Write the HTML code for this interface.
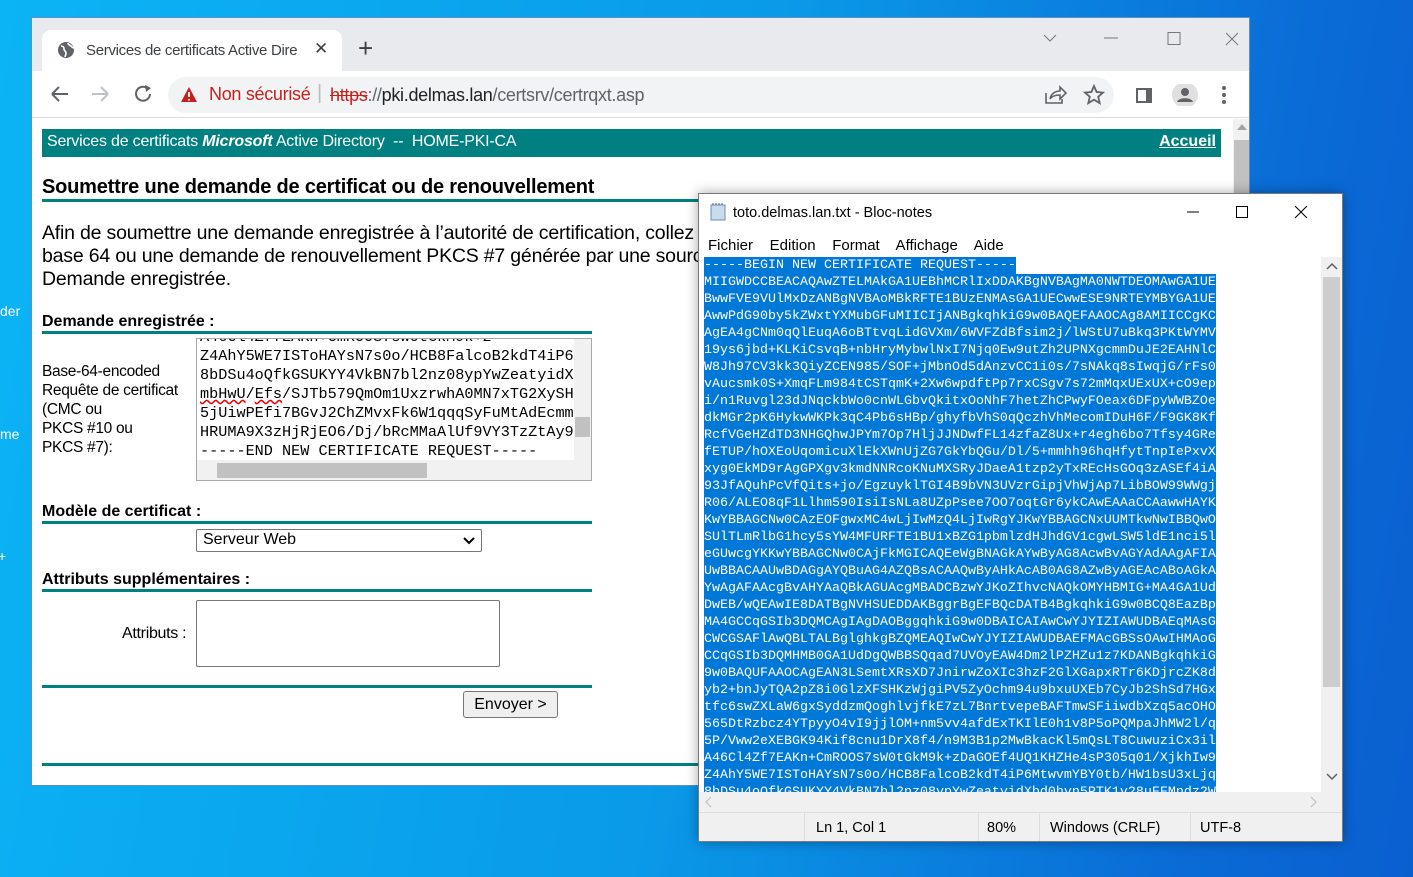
<!DOCTYPE html>
<html><head><meta charset="utf-8"><style>
*{margin:0;padding:0;box-sizing:border-box}
body{width:1413px;height:877px;overflow:hidden;position:relative;background:linear-gradient(100deg,#0bb4f5 0%,#0a9ae8 50%,#0a6bd6 85%,#0a5fcf 100%);font-family:"Liberation Sans",Arial,sans-serif}
.a{position:absolute;white-space:nowrap}
.br{position:absolute;left:31px;top:17px;width:1219px;height:769px;background:#fff;border:1px solid #5a8fc8;overflow:hidden}
.tabbar{position:absolute;left:0;top:0;width:100%;height:53px;background:#e8eaed}
.tab{position:absolute;left:10px;top:12px;width:300px;height:42px;background:#fff;border-radius:9px 9px 0 0}
.omni{position:absolute;left:136px;top:59px;width:946px;height:36px;background:#f1f3f4;border-radius:18px}
.bar{position:absolute;left:10px;top:111px;width:1179px;height:28px;background:#008080;color:#fff;font-size:16px}
.h{font-weight:bold;font-size:16px;color:#000}
.tl{position:absolute;background:#008080;height:3px}
.ta{position:absolute;border:1px solid #a9a9a9;background:#fff;overflow:hidden}
.np{position:absolute;left:698px;top:193px;width:645px;height:649px;background:#fff;border:1px solid #7a7a7a;box-shadow:0 0 12px rgba(0,0,0,.35);overflow:hidden}
.code{position:absolute;left:5px;top:63px;font-family:"Liberation Mono",monospace;font-size:13.33px;line-height:17px;color:#fff}
.code div{background:#0078d7;display:inline-block;white-space:pre}
.m{font-size:14.5px;color:#000}
</style></head><body>
<div class="a" style="left:0;top:303px;color:#fff;font-size:14px">der</div>
<div class="a" style="left:0;top:426px;color:#fff;font-size:14px">me</div>
<div class="a" style="left:-2px;top:548px;color:#fff;font-size:14px">+</div>

<div class="br">
 <div class="tabbar"></div>
 <div class="tab"></div>
 <svg class="a" style="left:25px;top:23px" width="18" height="18" viewBox="0 0 18 18"><circle cx="9" cy="9" r="8" fill="#5f6368"/><path d="M4 5c2 0 3 1 3 3s2 2 2 4-1 3-1 4M11 2c0 2 2 2 3 3s2 2 3 2" stroke="#fff" stroke-width="1.6" fill="none"/></svg>
 <div class="a" style="left:54px;top:24px;font-size:15px;color:#3c4043;letter-spacing:-0.3px">Services de certificats Active Dire</div>
 <div class="a" style="left:282px;top:21px;font-size:17px;color:#3c4043">✕</div>
 <div class="a" style="left:326px;top:15px;font-size:26px;color:#3c4043;font-weight:300">+</div>
 <svg class="a" style="left:1010px;top:14px" width="200" height="14"><path d="M2 3l6 6 6-6" stroke="#777" fill="none"/><path d="M62 6h14" stroke="#777"/><rect x="126" y="0.5" width="12" height="12" stroke="#777" fill="none"/><path d="M184 1l12 12M196 1l-12 12" stroke="#777"/></svg>
 <svg class="a" style="left:18px;top:66px" width="110" height="20"><path d="M2 10h16M2 10l7-7M2 10l7 7" stroke="#5f6368" stroke-width="2" fill="none"/><path d="M42 10h16M58 10l-7-7M58 10l-7 7" stroke="#bdc1c6" stroke-width="2" fill="none"/><path d="M97 4a7 7 0 1 0 3 6" stroke="#5f6368" stroke-width="2" fill="none"/><path d="M95 1l6 3-5 4z" fill="#5f6368"/></svg>
 <div class="omni"></div>
 <svg class="a" style="left:148px;top:68px" width="18" height="17"><path d="M9 1L17 16H1z" fill="#c5221f"/><path d="M9 6v5M9 13v1.5" stroke="#fff" stroke-width="1.8"/></svg>
 <div class="a" style="left:177px;top:66px;font-size:18px;color:#c5221f;letter-spacing:-0.3px">Non sécurisé</div>
 <div class="a" style="left:285px;top:64px;font-size:20px;color:#bbb">|</div>
 <div class="a" style="left:298px;top:67px;font-size:18px;color:#202124;letter-spacing:-0.3px"><span style="color:#c5221f;text-decoration:line-through">https</span><span style="color:#5f6368">://</span>pki.delmas.lan<span style="color:#5f6368">/certsrv/certrqxt.asp</span></div>
 <svg class="a" style="left:1012px;top:66px" width="200" height="22"><path d="M2 9v10h16v-4M6 15c1-5 5-8 10-8V3l6 6-6 6v-4c-4 0-8 1-10 4" stroke="#5f6368" stroke-width="1.6" fill="none"/><path d="M50 2l2.6 6 6.4.6-4.8 4.2 1.5 6.3-5.7-3.4-5.7 3.4 1.5-6.3L41 8.6l6.4-.6z" stroke="#5f6368" stroke-width="1.8" fill="none"/><rect x="92" y="4" width="16" height="15" fill="#5f6368"/><rect x="94" y="6" width="8" height="11" fill="#fff"/><circle cx="141" cy="11" r="13" fill="#e0e0e0"/><circle cx="141" cy="8" r="4" fill="#5f6368"/><path d="M133 18c1-5 15-5 16 0z" fill="#5f6368"/><circle cx="180" cy="4" r="2" fill="#5f6368"/><circle cx="180" cy="11" r="2" fill="#5f6368"/><circle cx="180" cy="18" r="2" fill="#5f6368"/></svg>
 <div class="a" style="left:0;top:99px;width:100%;height:1px;background:#dadce0"></div>
 <div class="a" style="left:1201px;top:101px;width:17px;height:668px;background:#f1f1f1"></div>
 <div class="a" style="left:1202px;top:122px;width:15px;height:560px;background:#c1c1c1"></div>
 <svg class="a" style="left:1205px;top:106px" width="10" height="6"><path d="M0 6L5 0l5 6z" fill="#a3a3a3"/></svg>

 <div class="bar"><span class="a" style="left:5px;top:4px;letter-spacing:-0.2px">Services de certificats <b><i>Microsoft</i></b> Active Directory &nbsp;--&nbsp; HOME-PKI-CA</span><span class="a" style="right:5px;top:4px;font-weight:bold;text-decoration:underline">Accueil</span></div>
 <div class="a" style="left:10px;top:158px;font-size:20px;font-weight:bold;color:#000;letter-spacing:-0.2px">Soumettre une demande de certificat ou de renouvellement</div>
 <div class="tl" style="left:10px;top:181px;width:1179px"></div>
 <div class="a" style="left:10px;top:204px;font-size:19.5px;line-height:23px;color:#000;letter-spacing:-0.2px">Afin de soumettre une demande enregistrée à l’autorité de certification, collez une demande CMC ou PKCS #10 codée en<br>base 64 ou une demande de renouvellement PKCS #7 générée par une source externe (telle qu’un serveur Web) dans la zone<br>Demande enregistrée.</div>
 <div class="a h" style="left:10px;top:295px">Demande enregistrée :</div>
 <div class="tl" style="left:10px;top:313px;width:550px"></div>
 <div class="a m" style="left:10px;top:344px;font-size:15.5px;line-height:19px;color:#000;letter-spacing:-0.3px">Base-64-encoded<br>Requête de certificat<br>(CMC ou<br>PKCS #10 ou<br>PKCS #7):</div>
 <div class="ta" style="left:164px;top:320px;width:396px;height:143px">
  <div class="a" style="left:3px;top:-11px;font-family:'Liberation Mono',monospace;font-size:15.2px;line-height:19px;color:#000">A46Cl4Zf7EAKn+CmROOS7sW0tGkM9k+z<br>Z4AhY5WE7ISToHAYsN7s0o/HCB8FalcoB2kdT4iP6<br>8bDSu4oQfkGSUKYY4VkBN7bl2nz08ypYwZeatyidX<br><span style="text-decoration:underline wavy #e00">mbHwU</span>/<span style="text-decoration:underline wavy #e00">Efs</span>/SJTb579QmOm1UxzrwhA0MN7xTG2XySH<br>5jUiwPEfi7BGvJ2ChZMvxFk6W1qqqSyFuMtAdEcmm<br>HRUMA9X3zHjRjEO6/Dj/bRcMMaAlUf9VY3TzZtAy9<br>-----END NEW CERTIFICATE REQUEST-----</div>
  <div class="a" style="left:377px;top:0;width:17px;height:121px;background:#f1f1f1"></div>
  <div class="a" style="left:378px;top:78px;width:15px;height:20px;background:#c1c1c1"></div>
  <div class="a" style="left:0;top:121px;width:394px;height:20px;background:#f1f1f1"></div>
  <div class="a" style="left:20px;top:124px;width:210px;height:15px;background:#c1c1c1"></div>
 </div>
 <div class="a h" style="left:10px;top:485px">Modèle de certificat :</div>
 <div class="tl" style="left:10px;top:503px;width:550px"></div>
 <div class="a" style="left:164px;top:511px;width:286px;height:23px;border:1px solid #767676;border-radius:2px;font-size:16px;padding:1px 6px">Serveur Web<svg class="a" style="right:6px;top:7px" width="12" height="8"><path d="M1 1l5 5 5-5" stroke="#000" stroke-width="2" fill="none"/></svg></div>
 <div class="a h" style="left:10px;top:553px">Attributs supplémentaires :</div>
 <div class="tl" style="left:10px;top:571px;width:550px"></div>
 <div class="a" style="left:90px;top:607px;font-size:16px;letter-spacing:-0.3px">Attributs :</div>
 <div class="a" style="left:164px;top:582px;width:304px;height:67px;border:1px solid #767676;border-radius:2px"></div>
 <div class="tl" style="left:10px;top:667px;width:550px"></div>
 <div class="a" style="left:431px;top:673px;width:95px;height:27px;border:1px solid #767676;border-radius:3px;background:#efefef;font-size:16px;text-align:center;line-height:25px">Envoyer &gt;</div>
 <div class="tl" style="left:10px;top:745px;width:1179px"></div>
</div>

<div class="np">
 <svg class="a" style="left:10px;top:9px" width="18" height="18"><rect x="2" y="2" width="14" height="15" fill="#c8dcee" stroke="#6c8fb0"/><path d="M4 2V0M7 2V0M10 2V0M13 2V0" stroke="#555"/></svg>
 <div class="a" style="left:34px;top:11px;font-size:14.5px;color:#000">toto.delmas.lan.txt - Bloc-notes</div>
 <svg class="a" style="left:488px;top:11px" width="140" height="14"><path d="M0 7h12" stroke="#000"/><rect x="49.5" y="1.5" width="11" height="11" stroke="#000" fill="none"/><path d="M108 1l12 12M120 1l-12 12" stroke="#000"/></svg>
 <div class="a" style="left:9px;top:43px;font-size:15px">Fichier &nbsp;&nbsp; Edition &nbsp;&nbsp; Format &nbsp;&nbsp; Affichage &nbsp;&nbsp; Aide</div>
 <div class="code">
<div>-----BEGIN NEW CERTIFICATE REQUEST-----</div><br><div>MIIGWDCCBEACAQAwZTELMAkGA1UEBhMCRlIxDDAKBgNVBAgMA0NWTDEOMAwGA1UE</div><br><div>BwwFVE9VUlMxDzANBgNVBAoMBkRFTE1BUzENMAsGA1UECwwESE9NRTEYMBYGA1UE</div><br><div>AwwPdG90by5kZWxtYXMubGFuMIICIjANBgkqhkiG9w0BAQEFAAOCAg8AMIICCgKC</div><br><div>AgEA4gCNm0qQlEuqA6oBTtvqLidGVXm/6WVFZdBfsim2j/lWStU7uBkq3PKtWYMV</div><br><div>19ys6jbd+KLKiCsvqB+nbHryMybwlNxI7Njq0Ew9utZh2UPNXgcmmDuJE2EAHNlC</div><br><div>W8Jh97CV3kk3QiyZCEN985/SOF+jMbnOd5dAnzvCC1i0s/7sNAkq8sIwqjG/rFs0</div><br><div>vAucsmk0S+XmqFLm984tCSTqmK+2Xw6wpdftPp7rxCSgv7s72mMqxUExUX+cO9ep</div><br><div>i/n1Ruvgl23dJNqckbWo0cnWLGbvQkitxOoNhF7hetZhCPwyFOeax6DFpyWWBZOe</div><br><div>dkMGr2pK6HykwWKPk3qC4Pb6sHBp/ghyfbVhS0qQczhVhMecomIDuH6F/F9GK8Kf</div><br><div>RcfVGeHZdTD3NHGQhwJPYm7Op7HljJJNDwfFL14zfaZ8Ux+r4egh6bo7Tfsy4GRe</div><br><div>fETUP/hOXEoUqomicuXlEkXWnUjZG7GkYbQGu/Dl/5+mmhh96hqHfytTnpIePxvX</div><br><div>xyg0EkMD9rAgGPXgv3kmdNNRcoKNuMXSRyJDaeA1tzp2yTxREcHsGOq3zASEf4iA</div><br><div>93JfAQuhPcVfQits+jo/EgzuyklTGI4B9bVN3UVzrGipjVhWjAp7LibBOW99WWgj</div><br><div>R06/ALEO8qF1Llhm590IsiIsNLa8UZpPsee7OO7oqtGr6ykCAwEAAaCCAawwHAYK</div><br><div>KwYBBAGCNw0CAzEOFgwxMC4wLjIwMzQ4LjIwRgYJKwYBBAGCNxUUMTkwNwIBBQwO</div><br><div>SUlTLmRlbG1hcy5sYW4MFURFTE1BU1xBZG1pbmlzdHJhdGV1cgwLSW5ldE1nci5l</div><br><div>eGUwcgYKKwYBBAGCNw0CAjFkMGICAQEeWgBNAGkAYwByAG8AcwBvAGYAdAAgAFIA</div><br><div>UwBBACAAUwBDAGgAYQBuAG4AZQBsACAAQwByAHkAcAB0AG8AZwByAGEAcABoAGkA</div><br><div>YwAgAFAAcgBvAHYAaQBkAGUAcgMBADCBzwYJKoZIhvcNAQkOMYHBMIG+MA4GA1Ud</div><br><div>DwEB/wQEAwIE8DATBgNVHSUEDDAKBggrBgEFBQcDATB4BgkqhkiG9w0BCQ8EazBp</div><br><div>MA4GCCqGSIb3DQMCAgIAgDAOBggqhkiG9w0DBAICAIAwCwYJYIZIAWUDBAEqMAsG</div><br><div>CWCGSAFlAwQBLTALBglghkgBZQMEAQIwCwYJYIZIAWUDBAEFMAcGBSsOAwIHMAoG</div><br><div>CCqGSIb3DQMHMB0GA1UdDgQWBBSQqad7UVOyEAW4Dm2lPZHZu1z7KDANBgkqhkiG</div><br><div>9w0BAQUFAAOCAgEAN3LSemtXRsXD7JnirwZoXIc3hzF2GlXGapxRTr6KDjrcZK8d</div><br><div>yb2+bnJyTQA2pZ8i0GlzXFSHKzWjgiPV5ZyOchm94u9bxuUXEb7CyJb2ShSd7HGx</div><br><div>tfc6swZXLaW6gxSyddzmQoghlvjfkE7zL7BnrtvepeBAFTmwSFiiwdbXzq5acOHO</div><br><div>565DtRzbcz4YTpyyO4vI9jjlOM+nm5vv4afdExTKIlE0h1v8P5oPQMpaJhMW2l/q</div><br><div>5P/Vww2eXEBGK94Kif8cnu1DrX8f4/n9M3B1p2MwBkacKl5mQsLT8CuwuziCx3il</div><br><div>A46Cl4Zf7EAKn+CmROOS7sW0tGkM9k+zDaGOEf4UQ1KHZHe4sP305q01/XjkhIw9</div><br><div>Z4AhY5WE7ISToHAYsN7s0o/HCB8FalcoB2kdT4iP6MtwvmYBY0tb/HW1bsU3xLjq</div><br><div>8bDSu4oQfkGSUKYY4VkBN7bl2nz08ypYwZeatyidXbd0hvn5PTK1v28uFFMndz2W</div>
 </div>
 <div class="a" style="left:0;top:598px;width:100%;height:50px;background:#fff"></div>
 <div class="a" style="left:622px;top:63px;width:21px;height:535px;background:#f0f0f0"></div>
 <div class="a" style="left:624px;top:83px;width:17px;height:410px;background:#cdcdcd"></div>
 <svg class="a" style="left:627px;top:68px" width="12" height="520"><path d="M1 7l5-5 5 5" stroke="#606060" stroke-width="1.5" fill="none"/><path d="M1 512l5 5 5-5" stroke="#606060" stroke-width="1.5" fill="none"/></svg>
 <div class="a" style="left:0;top:598px;width:643px;height:20px;background:#f0f0f0"></div>
 <svg class="a" style="left:6px;top:602px" width="620" height="12"><path d="M6 1L1 6l5 5" stroke="#bbb" fill="none"/><path d="M606 1l5 5-5 5" stroke="#bbb" fill="none"/></svg>
 <div class="a" style="left:0;top:618px;width:643px;height:30px;background:#f0f0f0;border-top:1px solid #ddd"></div>
 <div class="a" style="left:105px;top:619px;width:1px;height:29px;background:#ddd"></div>
 <div class="a" style="left:279px;top:619px;width:1px;height:29px;background:#ddd"></div>
 <div class="a" style="left:340px;top:619px;width:1px;height:29px;background:#ddd"></div>
 <div class="a" style="left:491px;top:619px;width:1px;height:29px;background:#ddd"></div>
 <div class="a" style="left:117px;top:626px;font-size:14.5px">Ln 1, Col 1</div>
 <div class="a" style="left:288px;top:626px;font-size:14.5px">80%</div>
 <div class="a" style="left:351px;top:626px;font-size:14.5px">Windows (CRLF)</div>
 <div class="a" style="left:501px;top:626px;font-size:14.5px">UTF-8</div>
</div>
</body></html>
